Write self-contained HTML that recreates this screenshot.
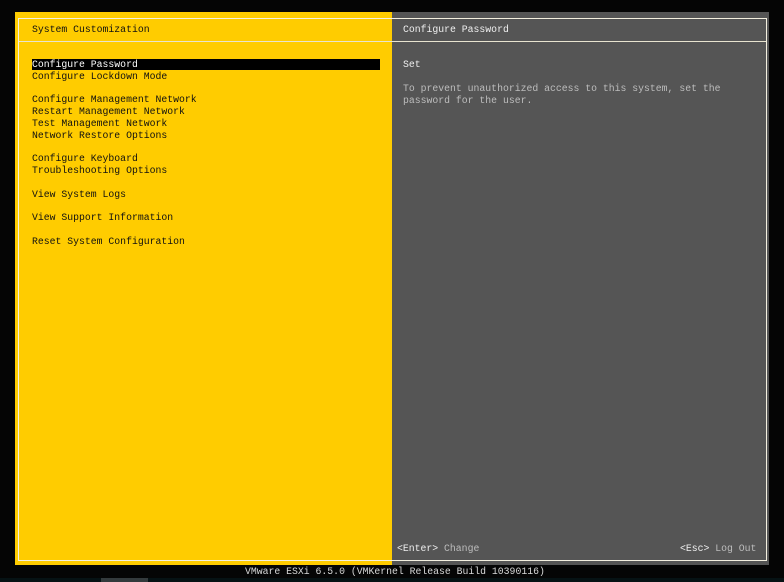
<!DOCTYPE html>
<html><head><style>
body{margin:0;width:784px;height:582px;background:#050505;position:relative;overflow:hidden;font-family:"Liberation Mono","DejaVu Sans Mono",monospace;font-size:9.8px;}
.a{position:absolute;white-space:pre;line-height:11.8px;}
</style></head><body>
<div class="a" style="left:15px;top:12px;width:377px;height:553px;background:#ffcc00"></div>
<div class="a" style="left:392px;top:12px;width:377px;height:553px;background:#555555"></div>
<div class="a" style="left:18px;top:18px;width:747px;height:541px;border:1px solid #f4f0e0"></div>
<div class="a" style="left:19px;top:41px;width:747px;height:1px;background:#e8e4d0"></div>
<div class="a" style="left:32px;top:24px;color:#111">System Customization</div>
<div class="a" style="left:403px;top:24px;color:#f0f0f0">Configure Password</div>
<div class="a" style="left:32px;top:59px;width:348px;height:11px;background:#000"></div>
<div class="a" style="left:32px;top:59px;color:#fff">Configure Password</div>
<div class="a" style="left:32px;top:70.8px;color:#111">Configure Lockdown Mode

Configure Management Network
Restart Management Network
Test Management Network
Network Restore Options

Configure Keyboard
Troubleshooting Options

View System Logs

View Support Information

Reset System Configuration</div>
<div class="a" style="left:403px;top:59px;color:#f0f0f0">Set</div>
<div class="a" style="left:403px;top:83px;color:#bdbdbd">To prevent unauthorized access to this system, set the
password for the user.</div>
<div class="a" style="left:397px;top:543px;color:#f0f0f0">&lt;Enter&gt; <span style="color:#bdbdbd">Change</span></div>
<div class="a" style="left:680px;top:543px;color:#f0f0f0">&lt;Esc&gt; <span style="color:#bdbdbd">Log Out</span></div>
<div class="a" style="left:245px;top:566px;color:#d8d8d8">VMware ESXi 6.5.0 (VMKernel Release Build 10390116)</div>
<div class="a" style="left:0;top:578px;width:784px;height:4px;background:#061214"></div>
<div class="a" style="left:101px;top:578px;width:47px;height:4px;background:#333a3c"></div>
</body></html>
